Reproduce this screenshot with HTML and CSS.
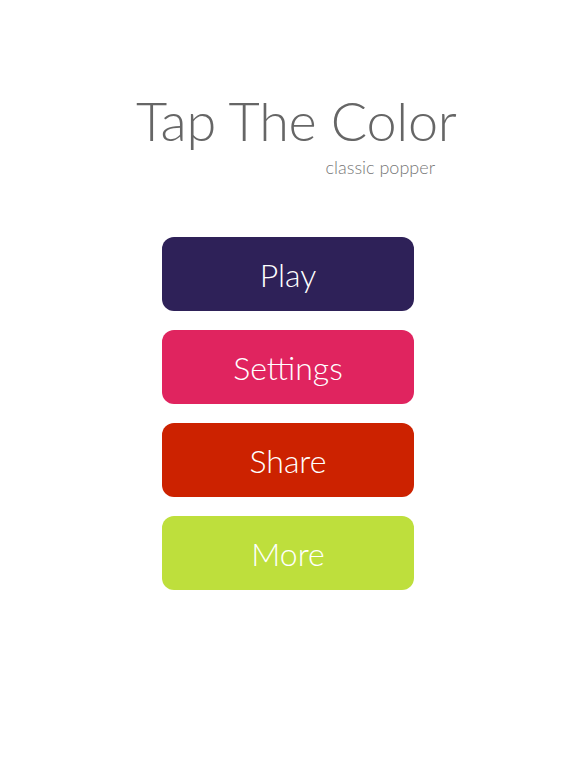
FILE: index.html
```html
<!DOCTYPE html>
<html lang="en">
<head>
    <meta charset="UTF-8">
    <meta name="viewport" content="width=device-width, initial-scale=1.0">
    <title>Tap The Color</title>
    <link rel="stylesheet" href="styles.css">
</head>
<body>
    <div class="header">
        <h1 class="title">Tap The Color</h1>
        <p class="subtitle">classic popper</p>
    </div>
    <div class="menu">
        <button class="menu-button play">Play</button>
        <button class="menu-button settings">Settings</button>
        <button class="menu-button share">Share</button>
        <button class="menu-button more">More</button>
    </div>
</body>
</html>
```

FILE: styles.css
```css
body {
    margin: 0;
    background-color: #fff;
    font-family: "Lato", "Noto Sans", sans-serif;
    font-weight: 300;
}

.header {
    padding-top: 89px;
    width: 320px;
    margin: 0 auto;
}
.title {
    margin: 0;
    padding-left: 8px;
    color: #666;
    font-size: 54px;
    font-weight: 300;
    line-height: 64px;
    letter-spacing: -0.3px;
    text-align: center;
    white-space: nowrap;
}
.subtitle {
    margin: 2px 0 0 0;
    padding-right: 13px;
    color: #777;
    font-size: 18px;
    line-height: 24px;
    text-align: right;
}

.menu {
    margin-top: 58px;
    display: flex;
    flex-flow: column nowrap;
    align-items: center;
    gap: 19px;
}
.menu-button {
    width: 252px;
    height: 74px;
    border: none;
    border-radius: 12px;
    color: #fff;
    font-family: inherit;
    font-size: 32px;
    font-weight: 300;
}
.play {
    background-color: #2e2158;
}
.settings {
    background-color: #e0245f;
}
.share {
    background-color: #cc2200;
}
.more {
    background-color: #bedf3c;
}
```
